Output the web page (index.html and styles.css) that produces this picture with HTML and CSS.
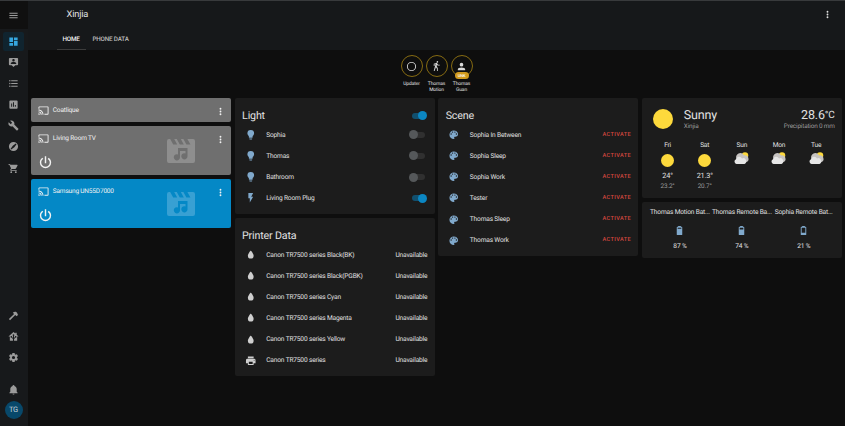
FILE: index.html
```html
<!DOCTYPE html>
<html lang="en">
<head>
<meta charset="utf-8">
<title>Xinjia</title>
<link rel="stylesheet" href="styles.css">
</head>
<body>
<svg class="sprite" aria-hidden="true">
  <symbol id="menu" viewBox="0 0 24 24"><path d="M3,6H21V8H3V6M3,11H21V13H3V11M3,16H21V18H3V16Z"/></symbol>
  <symbol id="dashboard" viewBox="0 0 24 24"><path d="M13,3V9H21V3M13,21H21V11H13M3,21H11V15H3M3,13H11V3H3V13Z"/></symbol>
  <symbol id="tooltip-account" viewBox="0 0 24 24"><path fill-rule="evenodd" d="M20,2H4A2,2 0 0,0 2,4V16A2,2 0 0,0 4,18H8L12,22L16,18H20A2,2 0 0,0 22,16V4A2,2 0 0,0 20,2M12,4.3C13.5,4.3 14.7,5.5 14.7,7C14.7,8.5 13.5,9.7 12,9.7C10.5,9.7 9.3,8.5 9.3,7C9.3,5.5 10.5,4.3 12,4.3M18,15H6V14.1C6,12.1 10,11 12,11C14,11 18,12.1 18,14.1V15Z"/></symbol>
  <symbol id="list" viewBox="0 0 24 24"><path d="M7,5H21V7H7V5M7,13V11H21V13H7M7,19V17H21V19H7Z"/><circle cx="4" cy="6" r="1.5"/><circle cx="4" cy="12" r="1.5"/><circle cx="4" cy="18" r="1.5"/></symbol>
  <symbol id="chart" viewBox="0 0 24 24"><path fill-rule="evenodd" d="M9,17H7V10H9V17M13,17H11V7H13V17M17,17H15V13H17V17M19,3H5A2,2 0 0,0 3,5V19A2,2 0 0,0 5,21H19A2,2 0 0,0 21,19V5A2,2 0 0,0 19,3Z"/></symbol>
  <symbol id="wrench" viewBox="0 0 24 24"><path d="M22.7,19L13.6,9.9C14.5,7.6 14,4.9 12.1,3C10.1,1 7.1,0.6 4.7,1.7L9,6L6,9L1.6,4.7C0.4,7.1 0.9,10.1 2.9,12.1C4.8,14 7.5,14.5 9.8,13.6L18.9,22.7C19.3,23.1 19.9,23.1 20.3,22.7L22.6,20.4C23.1,20 23.1,19.3 22.7,19Z"/></symbol>
  <symbol id="slash" viewBox="0 0 24 24"><path fill-rule="evenodd" d="M12,2A10,10 0 0,1 12,22A10,10 0 0,1 12,2M17,5.5L10.5,10.2L5.5,17.2L7,18.6L13.8,13.6L18.6,7Z"/></symbol>
  <symbol id="cart" viewBox="0 0 24 24"><path d="M17,18C15.89,18 15,18.89 15,20A2,2 0 0,0 17,22A2,2 0 0,0 19,20C19,18.89 18.1,18 17,18M1,2V4H3L6.6,11.59L5.24,14.04C5.09,14.32 5,14.65 5,15A2,2 0 0,0 7,17H19V15H7.42A0.25,0.25 0 0,1 7.17,14.75C7.17,14.7 7.18,14.66 7.2,14.63L8.1,13H15.55C16.3,13 16.96,12.58 17.3,11.97L20.88,5.5C20.95,5.34 21,5.17 21,5A1,1 0 0,0 20,4H5.21L4.27,2M7,18C5.89,18 5,18.89 5,20A2,2 0 0,0 7,22A2,2 0 0,0 9,20C9,18.89 8.1,18 7,18Z"/></symbol>
  <symbol id="hammer" viewBox="0 0 24 24"><path d="M2,19.6L13.3,8.6L10.5,6C13,3.7 16.5,3.3 18.6,4.8L20.7,7L20.2,8.5L22.3,10.4L18.9,13.8L15.8,11L4.4,22.2Z"/></symbol>
  <symbol id="home" viewBox="0 0 24 24"><path fill-rule="evenodd" d="M12,2L1,12H4V21H10.8V17.5L7.6,14.4A1.7,1.7 0 1,1 8.8,13.2L10.8,15.2V10.3A1.8,1.8 0 1,1 13.2,10.3V15.2L15.2,13.2A1.7,1.7 0 1,1 16.4,14.4L13.2,17.5V21H20V12H23L19,8.4V4H16V5.6Z"/></symbol>
  <symbol id="cog" viewBox="0 0 24 24"><path fill-rule="evenodd" d="M12,15.5A3.5,3.5 0 0,1 8.5,12A3.5,3.5 0 0,1 12,8.5A3.5,3.5 0 0,1 15.5,12A3.5,3.5 0 0,1 12,15.5M19.43,12.97C19.47,12.65 19.5,12.33 19.5,12C19.5,11.67 19.47,11.34 19.43,11L21.54,9.37C21.73,9.22 21.78,8.95 21.66,8.73L19.66,5.27C19.54,5.05 19.27,4.96 19.05,5.05L16.56,6.05C16.04,5.66 15.5,5.32 14.87,5.07L14.5,2.42C14.46,2.18 14.25,2 14,2H10C9.75,2 9.54,2.18 9.5,2.42L9.13,5.07C8.5,5.32 7.96,5.66 7.44,6.05L4.95,5.05C4.73,4.96 4.46,5.05 4.34,5.27L2.34,8.73C2.21,8.95 2.27,9.22 2.46,9.37L4.57,11C4.53,11.34 4.5,11.67 4.5,12C4.5,12.33 4.53,12.65 4.57,12.97L2.46,14.63C2.27,14.78 2.21,15.05 2.34,15.27L4.34,18.73C4.46,18.95 4.73,19.03 4.95,18.95L7.44,17.94C7.96,18.34 8.5,18.68 9.13,18.93L9.5,21.58C9.54,21.82 9.75,22 10,22H14C14.25,22 14.46,21.82 14.5,21.58L14.87,18.93C15.5,18.67 16.04,18.34 16.56,17.94L19.05,18.95C19.27,19.03 19.54,18.95 19.66,18.73L21.66,15.27C21.78,15.05 21.73,14.78 21.54,14.63L19.43,12.97Z"/></symbol>
  <symbol id="bell" viewBox="0 0 24 24"><path d="M21,19V20H3V19L5,17V11C5,7.9 7.03,5.17 10,4.29C10,4.19 10,4.1 10,4A2,2 0 0,1 12,2A2,2 0 0,1 14,4C14,4.1 14,4.19 14,4.29C16.97,5.17 19,7.9 19,11V17L21,19M14,21A2,2 0 0,1 12,23A2,2 0 0,1 10,21"/></symbol>
  <symbol id="dots" viewBox="0 0 24 24"><circle cx="12" cy="6" r="2"/><circle cx="12" cy="12" r="2"/><circle cx="12" cy="18" r="2"/></symbol>
  <symbol id="cast" viewBox="0 0 24 24"><path d="M1,10V12A9,9 0 0,1 10,21H12C12,14.92 7.07,10 1,10M1,14V16A5,5 0 0,1 6,21H8A7,7 0 0,0 1,14M1,18V21H4A3,3 0 0,0 1,18M21,3H3C1.89,3 1,3.89 1,5V8H3V5H21V19H14V21H21A2,2 0 0,0 23,19V5C23,3.89 22.1,3 21,3Z"/></symbol>
  <symbol id="power" viewBox="0 0 24 24"><path d="M16.56,5.44L15.11,6.89C16.84,7.94 18,9.83 18,12A6,6 0 0,1 12,18A6,6 0 0,1 6,12C6,9.83 7.16,7.94 8.88,6.88L7.44,5.44C5.36,6.88 4,9.28 4,12A8,8 0 0,0 12,20A8,8 0 0,0 20,12C20,9.28 18.64,6.88 16.56,5.44M13,3H11V13H13"/></symbol>
  <symbol id="movie" viewBox="0 0 28 24"><path fill-rule="evenodd" d="M2,0H3.2L6.2,5.6H10.2L7.2,0H9.8L12.8,5.6H16.8L13.8,0H16.4L19.4,5.6H23.4L20.4,0H26A2,2 0 0,1 28,2V22A2,2 0 0,1 26,24H2A2,2 0 0,1 0,22V2A2,2 0 0,1 2,0M11,9V15.4A3.1,3.1 0 1,0 13,18.2V12H18.5V14.4A3.1,3.1 0 1,0 20.5,17.2V9Z"/></symbol>
  <symbol id="bulb" viewBox="0 0 24 24"><path d="M12,2A7,7 0 0,0 5,9C5,11.38 6.19,13.47 8,14.74V17A1,1 0 0,0 9,18H15A1,1 0 0,0 16,17V14.74C17.81,13.47 19,11.38 19,9A7,7 0 0,0 12,2M9,21A1,1 0 0,0 10,22H14A1,1 0 0,0 15,21V20H9V21Z"/></symbol>
  <symbol id="flash" viewBox="0 0 24 24"><path d="M7,2V13H10V22L17,10H13L17,2H7Z"/></symbol>
  <symbol id="water" viewBox="0 0 24 24"><path d="M12,20A6,6 0 0,1 6,14C6,10 12,3.25 12,3.25C12,3.25 18,10 18,14A6,6 0 0,1 12,20Z"/></symbol>
  <symbol id="printer" viewBox="0 0 24 24"><path fill-rule="evenodd" d="M18,3H6V7H18M19,12A1,1 0 0,1 18,11A1,1 0 0,1 19,10A1,1 0 0,1 20,11A1,1 0 0,1 19,12M16,19H8V14H16M19,8H5A3,3 0 0,0 2,11V17H6V21H18V17H22V11A3,3 0 0,0 19,8Z"/></symbol>
  <symbol id="palette" viewBox="0 0 24 24"><path fill-rule="evenodd" d="M17.5,12A1.5,1.5 0 0,1 16,10.5A1.5,1.5 0 0,1 17.5,9A1.5,1.5 0 0,1 19,10.5A1.5,1.5 0 0,1 17.5,12M14.5,8A1.5,1.5 0 0,1 13,6.5A1.5,1.5 0 0,1 14.5,5A1.5,1.5 0 0,1 16,6.5A1.5,1.5 0 0,1 14.5,8M9.5,8A1.5,1.5 0 0,1 8,6.5A1.5,1.5 0 0,1 9.5,5A1.5,1.5 0 0,1 11,6.5A1.5,1.5 0 0,1 9.5,8M6.5,12A1.5,1.5 0 0,1 5,10.5A1.5,1.5 0 0,1 6.5,9A1.5,1.5 0 0,1 8,10.5A1.5,1.5 0 0,1 6.5,12M12,3A9,9 0 0,0 3,12A9,9 0 0,0 12,21A1.5,1.5 0 0,0 13.5,19.5C13.5,19.11 13.35,18.76 13.11,18.5C12.88,18.23 12.73,17.88 12.73,17.5A1.5,1.5 0 0,1 14.23,16H16A5,5 0 0,0 21,11C21,6.58 16.97,3 12,3Z"/></symbol>
  <symbol id="circle" viewBox="0 0 24 24"><path fill-rule="evenodd" d="M12,20A8,8 0 0,1 4,12A8,8 0 0,1 12,4A8,8 0 0,1 20,12A8,8 0 0,1 12,20M12,2A10,10 0 0,0 2,12A10,10 0 0,0 12,22A10,10 0 0,0 22,12A10,10 0 0,0 12,2Z"/></symbol>
  <symbol id="walk" viewBox="0 0 24 24"><path d="M14.12,10H19V8.2H15.38L13.38,4.87C13.08,4.37 12.54,4.03 11.92,4.03C11.74,4.03 11.58,4.06 11.42,4.11L6,5.8V11H7.8V7.33L9.91,6.67L6,22H7.8L10.67,13.89L13,17V22H14.8V15.59L12.31,11.05L13.04,8.18M14,3.8C15,3.8 15.8,3 15.8,2C15.8,1 15,0.2 14,0.2C13,0.2 12.2,1 12.2,2C12.2,3 13,3.8 14,3.8Z"/></symbol>
  <symbol id="account" viewBox="0 0 24 24"><path d="M12,4A4,4 0 0,1 16,8A4,4 0 0,1 12,12A4,4 0 0,1 8,8A4,4 0 0,1 12,4M12,14C16.42,14 20,15.79 20,18V20H4V18C4,15.79 7.58,14 12,14Z"/></symbol>
  <symbol id="battery-90" viewBox="0 0 24 24"><path fill-rule="evenodd" d="M16,8H8V6H16M16.67,4H15V2H9V4H7.33A1.33,1.33 0 0,0 6,5.33V20.67C6,21.4 6.6,22 7.33,22H16.67A1.33,1.33 0 0,0 18,20.67V5.33C18,4.6 17.4,4 16.67,4Z"/></symbol>
  <symbol id="battery-70" viewBox="0 0 24 24"><path fill-rule="evenodd" d="M16,10H8V6H16M16.67,4H15V2H9V4H7.33A1.33,1.33 0 0,0 6,5.33V20.67C6,21.4 6.6,22 7.33,22H16.67A1.33,1.33 0 0,0 18,20.67V5.33C18,4.6 17.4,4 16.67,4Z"/></symbol>
  <symbol id="battery-20" viewBox="0 0 24 24"><path fill-rule="evenodd" d="M16,17H8V6H16M16.67,4H15V2H9V4H7.33A1.33,1.33 0 0,0 6,5.33V20.67C6,21.4 6.6,22 7.33,22H16.67A1.33,1.33 0 0,0 18,20.67V5.33C18,4.6 17.4,4 16.67,4Z"/></symbol>
  <symbol id="sun" viewBox="0 0 24 24"><circle cx="12" cy="12" r="12" fill="#fdd93c"/></symbol>
  <symbol id="cloudy" viewBox="0 0 30 24"><circle cx="22" cy="7" r="6.5" fill="#fdd93c"/><path fill="#c6c3c1" d="M5,14A8,8 0 0,1 20,7A7,7 0 0,1 29,14A5,5 0 0,1 24,20H12Z"/><path fill="#e6e6e6" d="M5,24A5,5 0 0,1 4,14.500A6.500,6.500 0 0,1 16,13A5.500,5.500 0 0,1 21,24Z"/></symbol>
</svg>

<div class="app">
  <nav class="sidebar">
    <div class="menu"><svg class="nav-icon"><use href="#menu"/></svg></div>
    <div class="nav-list">
      <a class="nav-item active"><svg class="nav-icon"><use href="#dashboard"/></svg></a>
      <a class="nav-item"><svg class="nav-icon"><use href="#tooltip-account"/></svg></a>
      <a class="nav-item"><svg class="nav-icon"><use href="#list"/></svg></a>
      <a class="nav-item"><svg class="nav-icon"><use href="#chart"/></svg></a>
      <a class="nav-item"><svg class="nav-icon"><use href="#wrench"/></svg></a>
      <a class="nav-item"><svg class="nav-icon"><use href="#slash"/></svg></a>
      <a class="nav-item"><svg class="nav-icon"><use href="#cart"/></svg></a>
    </div>
    <div class="nav-list nav-bottom">
      <a class="nav-item"><svg class="nav-icon"><use href="#hammer"/></svg></a>
      <a class="nav-item"><svg class="nav-icon"><use href="#home"/></svg></a>
      <a class="nav-item"><svg class="nav-icon"><use href="#cog"/></svg></a>
    </div>
    <a class="nav-item bell"><svg class="nav-icon"><use href="#bell"/></svg></a>
    <div class="avatar">TG</div>
  </nav>

  <main class="main">
    <header class="header">
      <div class="toolbar"><h1>Xinjia</h1><svg class="more"><use href="#dots"/></svg></div>
      <div class="tabs"><span class="tab selected">HOME</span><span class="tab">PHONE DATA</span></div>
    </header>

    <div class="badges">
      <div class="badge"><div class="ring"><svg><use href="#circle"/></svg></div><span>Updater</span></div>
      <div class="badge"><div class="ring"><svg><use href="#walk"/></svg></div><span>Thomas Motion</span></div>
      <div class="badge"><div class="ring"><svg><use href="#account"/></svg><b>UNK</b></div><span>Thomas Guan</span></div>
    </div>

    <div class="columns">
      <section class="column players">
        <article class="media small">
          <div class="media-top"><svg class="cast"><use href="#cast"/></svg><span>Coatlique</span><svg class="more"><use href="#dots"/></svg></div>
        </article>
        <article class="media">
          <div class="media-top"><svg class="cast"><use href="#cast"/></svg><span>Living Room TV</span><svg class="more"><use href="#dots"/></svg></div>
          <div class="media-body"><svg class="power"><use href="#power"/></svg><svg class="movie"><use href="#movie"/></svg></div>
        </article>
        <article class="media on">
          <div class="media-top"><svg class="cast"><use href="#cast"/></svg><span>Samsung UN55D7000</span><svg class="more"><use href="#dots"/></svg></div>
          <div class="media-body"><svg class="power"><use href="#power"/></svg><svg class="movie"><use href="#movie"/></svg></div>
        </article>
      </section>

      <section class="column">
        <article class="card">
          <div class="card-head"><h2>Light</h2><i class="toggle on"></i></div>
          <div class="row"><svg class="blue"><use href="#bulb"/></svg><span>Sophia</span><i class="toggle"></i></div>
          <div class="row"><svg class="blue"><use href="#bulb"/></svg><span>Thomas</span><i class="toggle"></i></div>
          <div class="row"><svg class="blue"><use href="#bulb"/></svg><span>Bathroom</span><i class="toggle"></i></div>
          <div class="row"><svg class="blue"><use href="#flash"/></svg><span>Living Room Plug</span><i class="toggle on"></i></div>
        </article>
        <article class="card">
          <div class="card-head"><h2>Printer Data</h2></div>
          <div class="row"><svg><use href="#water"/></svg><span>Canon TR7500 series Black(BK)</span><em>Unavailable</em></div>
          <div class="row"><svg><use href="#water"/></svg><span>Canon TR7500 series Black(PGBK)</span><em>Unavailable</em></div>
          <div class="row"><svg><use href="#water"/></svg><span>Canon TR7500 series Cyan</span><em>Unavailable</em></div>
          <div class="row"><svg><use href="#water"/></svg><span>Canon TR7500 series Magenta</span><em>Unavailable</em></div>
          <div class="row"><svg><use href="#water"/></svg><span>Canon TR7500 series Yellow</span><em>Unavailable</em></div>
          <div class="row"><svg><use href="#printer"/></svg><span>Canon TR7500 series</span><em>Unavailable</em></div>
        </article>
      </section>

      <section class="column">
        <article class="card">
          <div class="card-head"><h2>Scene</h2></div>
          <div class="row"><svg class="blue"><use href="#palette"/></svg><span>Sophia In Between</span><a class="activate">ACTIVATE</a></div>
          <div class="row"><svg class="blue"><use href="#palette"/></svg><span>Sophia Sleep</span><a class="activate">ACTIVATE</a></div>
          <div class="row"><svg class="blue"><use href="#palette"/></svg><span>Sophia Work</span><a class="activate">ACTIVATE</a></div>
          <div class="row"><svg class="blue"><use href="#palette"/></svg><span>Tester</span><a class="activate">ACTIVATE</a></div>
          <div class="row"><svg class="blue"><use href="#palette"/></svg><span>Thomas Sleep</span><a class="activate">ACTIVATE</a></div>
          <div class="row"><svg class="blue"><use href="#palette"/></svg><span>Thomas Work</span><a class="activate">ACTIVATE</a></div>
        </article>
      </section>

      <section class="column">
        <article class="card weather">
          <div class="now">
            <svg class="big-sun"><use href="#sun"/></svg>
            <div class="now-text"><strong>Sunny</strong><small>Xinjia</small></div>
            <div class="now-temp"><strong>28.6<sup>°C</sup></strong><small>Precipitation 0 mm</small></div>
          </div>
          <div class="forecast">
            <div class="day"><span>Fri</span><svg class="sun"><use href="#sun"/></svg><span class="high">24°</span><span class="low">23.2°</span></div>
            <div class="day"><span>Sat</span><svg class="sun"><use href="#sun"/></svg><span class="high">21.3°</span><span class="low">20.7°</span></div>
            <div class="day"><span>Sun</span><svg class="cloud"><use href="#cloudy"/></svg></div>
            <div class="day"><span>Mon</span><svg class="cloud"><use href="#cloudy"/></svg></div>
            <div class="day"><span>Tue</span><svg class="cloud"><use href="#cloudy"/></svg></div>
          </div>
        </article>
        <article class="card glance">
          <div class="entity"><span>Thomas Motion Bat...</span><svg><use href="#battery-90"/></svg><span>87 %</span></div>
          <div class="entity"><span>Thomas Remote Ba...</span><svg><use href="#battery-70"/></svg><span>74 %</span></div>
          <div class="entity"><span>Sophia Remote Bat...</span><svg><use href="#battery-20"/></svg><span>21 %</span></div>
        </article>
      </section>
    </div>
  </main>
</div>
</body>
</html>
```
FILE: styles.css
```css
* { box-sizing: border-box; }
body {
  margin: 0;
  background: #0e0e0e;
  color: #e1e1e1;
  font: 6.6px/10px Roboto, sans-serif;
  letter-spacing: -.17px;
  text-rendering: geometricPrecision;
  overflow: hidden;
}
svg { display: block; fill: currentColor; flex: none; }
.sprite { display: none; }
h1, h2 { margin: 0; font-weight: 400; }

.app { display: flex; height: 426px; border-top: 1px solid #383a3c; }

.sidebar {
  width: 28px;
  flex: none;
  display: flex;
  flex-direction: column;
  align-items: center;
  padding-right: 1px;
  background: #17191b;
  color: #9b9b9b;
}
.menu {
  width: 28px;
  height: 28px;
  display: flex;
  align-items: center;
  justify-content: center;
  background: #101010;
}
.nav-icon { width: 11px; height: 11px; }
.nav-list { display: flex; flex-direction: column; gap: 2.1px; padding-top: 3px; }
.nav-item {
  width: 21px;
  height: 19px;
  display: flex;
  align-items: center;
  justify-content: center;
}
.nav-item.active { background: #10242f; color: #36a7e0; border-radius: 2px; }
.nav-bottom { margin-top: auto; }
.bell { margin-top: 13px; }
.avatar {
  width: 18px;
  height: 18px;
  margin: 2px 0 7px;
  border-radius: 50%;
  background: #08486a;
  color: #c3d0d8;
  font-size: 7.5px;
  line-height: 18px;
  text-align: center;
}

.main { flex: 1; min-width: 0; }
.header { height: 49px; background: #16181a; }
.toolbar {
  height: 27px;
  padding: 0 12px 0 38.500px;
  display: flex;
  align-items: center;
  justify-content: space-between;
}
.toolbar h1 { font-size: 9.300px; line-height: 14px; padding-top: 1px; }
.more { width: 11px; height: 11px; }
.tabs { display: flex; gap: .7px; padding-left: 28.500px; height: 22px; }
.tab {
  padding: 0 6px;
  line-height: 23px;
  font-size: 6.300px;
  font-weight: 500;
  color: #bdbdbd;
}
.tab.selected { color: #f2f2f2; border-bottom: 1px solid #3c3c3c; }

.badges { height: 48px; padding-top: 5px; display: flex; justify-content: center; gap: 3px; }
.badge {
  width: 22px;
  display: flex;
  flex-direction: column;
  align-items: center;
  font-size: 4.900px;
  letter-spacing: -.1px;
  line-height: 6px;
  text-align: center;
}
.ring {
  position: relative;
  width: 22px;
  height: 22px;
  flex: none;
  margin-bottom: 4px;
  border: 1px solid #866b12;
  border-radius: 50%;
  display: flex;
  align-items: center;
  justify-content: center;
  color: #d8d8d8;
}
.ring svg { width: 11px; height: 11px; }
.ring b {
  position: absolute;
  bottom: -3px;
  left: 3px;
  width: 14px;
  height: 7px;
  border-radius: 4px;
  background: #d19a1d;
  color: #fff;
  font-size: 4px;
  font-weight: 500;
  line-height: 7px;
}

.columns {
  display: grid;
  grid-template-columns: repeat(4, 1fr);
  gap: 3.900px;
  padding: 0 3.300px;
  align-items: start;
}
.column { display: flex; flex-direction: column; gap: 4.200px; min-width: 0; }
.column.players { gap: 3.800px; }

.card { background: #1c1c1c; border-radius: 2px; padding: 0 7.200px 5px; }
.card-head {
  height: 26.300px;
  padding-top: 9px;
  display: flex;
  justify-content: space-between;
}
.card-head h2 { font-size: 10.700px; line-height: 18px; }
.card-head .toggle { margin-top: 5.500px; }
.row { height: 21.130px; display: flex; align-items: center; }
.row svg { width: 11.500px; height: 11.500px; margin: 0 10.200px 0 2.500px; color: #cfcfcf; }
.row svg.blue { color: #80a9cc; }
.row span { flex: 1; white-space: nowrap; }
.row em { font-style: normal; }
.activate { color: #d5473f; font-size: 5.600px; font-weight: 500; letter-spacing: .35px; }

.toggle {
  position: relative;
  width: 14px;
  height: 6px;
  margin-right: 2.500px;
  border-radius: 3px;
  background: #303030;
}
.toggle::after {
  content: "";
  position: absolute;
  left: -2px;
  top: -1.500px;
  width: 9px;
  height: 9px;
  border-radius: 50%;
  background: #55585a;
}
.toggle.on { background: #11506f; margin-right: 1.500px; }
.toggle.on::after { left: 6.500px; background: #0b86c2; }

.media {
  height: 49px;
  padding: 6px 5px 0 7px;
  border-radius: 2px;
  background: #6f6f6f;
  color: #f2f2f2;
}
.media.small { height: 24.400px; }
.media.on { background: #0488c6; }
.media-top { display: flex; height: 14px; }
.media-top span { flex: 1; padding-left: 3.500px; font-size: 6.500px; line-height: 12px; }
.media-top .more { margin-top: 2px; }
.cast { width: 11px; height: 11px; margin-top: 1px; }
.media-body { display: flex; justify-content: space-between; padding-right: 31px; }
.power { width: 17px; height: 17px; margin: 8px 0 0 -1.500px; }
.movie { width: 28px; height: 24px; margin-top: -7px; color: #8e8e8e; }
.media.on .movie { color: #38a0d3; }

.weather { height: 100px; padding: 0; }
.now { display: flex; height: 41.500px; padding: 11px 7px 0 10.500px; }
.big-sun { width: 20px; height: 20px; margin-right: 11.300px; }
.now strong { display: block; font-size: 12.500px; font-weight: 400; line-height: 13px; }
.now small { display: block; font-size: 6.400px; line-height: 8px; color: #9b9b9b; }
.now-text { flex: 1; }
.now-temp { text-align: right; }
.now sup { font-size: 10px; line-height: 0; vertical-align: 1.500px; }
.forecast { display: grid; grid-template-columns: repeat(5, 1fr); padding: 0 7px; }
.day { display: flex; flex-direction: column; align-items: center; }
.sun { width: 13px; height: 13px; margin: 4px 0 3.500px; }
.cloud { width: 15px; height: 12px; margin-top: 2px; }
.high { font-size: 7.300px; line-height: 11px; }
.low { color: #9b9b9b; font-size: 6.400px; line-height: 11px; }

.glance { height: 56px; padding: 5px 7px; display: grid; grid-template-columns: repeat(3, 1fr); }
.entity { display: flex; flex-direction: column; align-items: center; line-height: 11px; white-space: nowrap; min-width: 0; }
.entity svg { width: 11px; height: 11px; margin: 7px 0 5px; color: #80a9cc; }
```
